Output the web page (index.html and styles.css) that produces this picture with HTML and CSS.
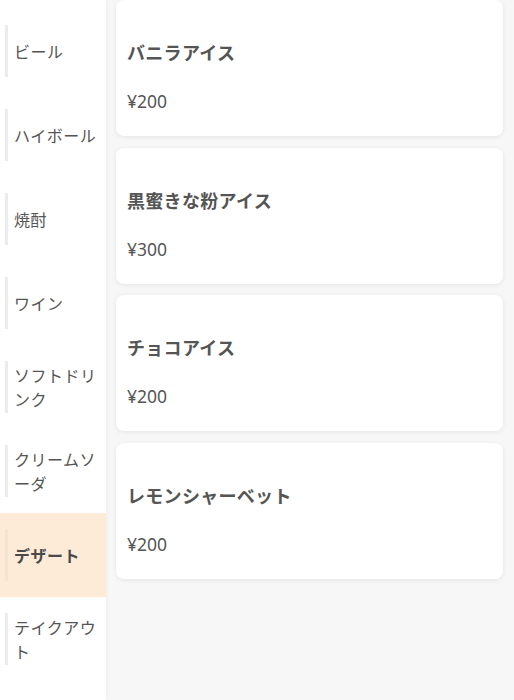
FILE: index.html
```html
<!DOCTYPE html>
<html lang="ja">
<head>
<meta charset="utf-8">
<link rel="stylesheet" href="styles.css">
</head>
<body>
<div class="page">
  <nav class="side">
    <div class="cat"><span class="cat-label">ビール</span></div>
    <div class="cat"><span class="cat-label">ハイボール</span></div>
    <div class="cat"><span class="cat-label">焼酎</span></div>
    <div class="cat"><span class="cat-label">ワイン</span></div>
    <div class="cat"><span class="cat-label">ソフトドリンク</span></div>
    <div class="cat"><span class="cat-label">クリームソーダ</span></div>
    <div class="cat active"><span class="cat-label">デザート</span></div>
    <div class="cat"><span class="cat-label">テイクアウト</span></div>
  </nav>
  <main class="list">
    <div class="card"><div class="name">バニラアイス</div><div class="price">¥200</div></div>
    <div class="card"><div class="name">黒蜜きな粉アイス</div><div class="price">¥300</div></div>
    <div class="card"><div class="name">チョコアイス</div><div class="price">¥200</div></div>
    <div class="card"><div class="name">レモンシャーベット</div><div class="price">¥200</div></div>
  </main>
</div>
</body>
</html>
```
FILE: styles.css
```css
html, body {
  margin: 0;
  padding: 0;
  height: 100%;
}
body {
  font-family: "Noto Sans CJK JP", "Noto Sans", sans-serif;
  color: #555;
  background: #f7f7f7;
}
.page {
  display: flex;
  height: 700px;
  overflow: hidden;
}
.side {
  width: 106px;
  flex: none;
  background: #fff;
  padding-top: 9px;
  box-shadow: 1px 0 4px rgba(0,0,0,0.04);
  position: relative;
  z-index: 1;
}
.cat {
  height: 84px;
  box-sizing: border-box;
  padding: 16px 0 16px 5px;
  display: flex;
}
.cat-label {
  flex: 1;
  display: flex;
  align-items: center;
  border-left: 3px solid #ececec;
  padding: 0 6px 0 6px;
  font-size: 16px;
  line-height: 24px;
  letter-spacing: 0.5px;
  color: #555;
}
.cat.active {
  background: #fdebd8;
}
.cat.active .cat-label {
  font-weight: bold;
  color: #4a4a4a;
  border-left-color: #f3e4d3;
}
.list {
  flex: 1;
  padding: 0 11px 0 10px;
  display: flex;
  flex-direction: column;
  gap: 11.5px;
}
.card {
  background: #fff;
  border-radius: 8px;
  height: 136px;
  box-sizing: border-box;
  padding: 37px 11px 0 11px;
  box-shadow: 0 1px 5px rgba(0,0,0,0.08);
  flex: none;
}
.name {
  font-size: 18px;
  font-weight: bold;
  line-height: 30px;
  color: #555;
  letter-spacing: 0.3px;
}
.price {
  font-family: "Noto Sans", "Noto Sans CJK JP", sans-serif;
  font-size: 17.5px;
  line-height: 24px;
  margin-top: 22px;
  color: #555;
}
```
